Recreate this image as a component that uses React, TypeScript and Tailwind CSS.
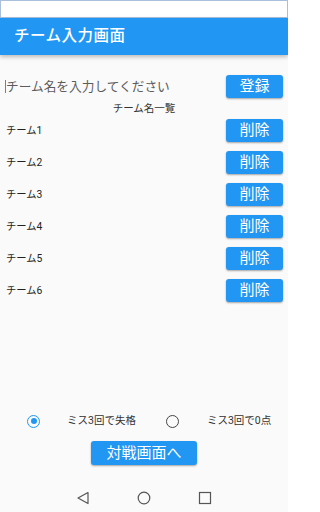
import React from 'react';

const teams = ['チーム1', 'チーム2', 'チーム3', 'チーム4', 'チーム5', 'チーム6'];

const font = { fontFamily: '"Roboto", "Noto Sans CJK JP", sans-serif' };

const BlueButton = ({ label, className = '' }: { label: string; className?: string }) => (
  <button
    className={`bg-[#2196f3] text-white rounded-[3px] shadow-[0_1px_2px_rgba(0,0,0,0.35)] flex items-center justify-center leading-none ${className}`}
  >
    {label}
  </button>
);

const App = () => {
  return (
    <div className="w-[288px] h-[512px] bg-[#fafafa] flex flex-col overflow-hidden" style={font}>
      {/* status bar */}
      <div className="h-[18px] bg-white border border-[#a9bfdc] shrink-0" />

      {/* app bar */}
      <div className="h-[37px] bg-[#2196f3] flex items-center px-[14px] shadow-[0_2px_4px_rgba(0,0,0,0.25)] shrink-0 z-10">
        <span className="text-white text-[15.5px] font-medium tracking-[0.5px]">チーム入力画面</span>
      </div>

      {/* input row */}
      <div className="flex items-center justify-between pl-[5px] pr-[5px] mt-[20px]">
        <div className="flex items-center">
          <span className="w-px h-[13px] bg-[#2196f3]" />
          <span className="text-[12.7px] text-[#5c5c5c]">チーム名を入力してください</span>
        </div>
        <BlueButton label="登録" className="w-[57px] h-[23px] text-[15px]" />
      </div>

      <div className="text-center text-[10.5px] text-[#333] mt-[4px] leading-[14px]">チーム名一覧</div>

      {/* team list */}
      <div className="flex flex-col gap-[9px] mt-[3px] pl-[6px] pr-[5px]">
        {teams.map((t) => (
          <div key={t} className="flex items-center justify-between h-[23px]">
            <span className="text-[10.3px] text-[#222]">{t}</span>
            <BlueButton label="削除" className="w-[57px] h-[23px] text-[15px]" />
          </div>
        ))}
      </div>

      <div className="flex-1" />

      {/* radio row */}
      <div className="flex items-center h-[14px] text-[10.5px] text-[#333]">
        <span className="ml-[27px] w-[13px] h-[13px] rounded-full border-[1.5px] border-[#2196f3] flex items-center justify-center">
          <span className="w-[6px] h-[6px] rounded-full bg-[#2196f3]" />
        </span>
        <span className="ml-[27px]">ミス3回で失格</span>
        <span className="ml-[30px] w-[13px] h-[13px] rounded-full border-[1.5px] border-[#444]" />
        <span className="ml-[28px]">ミス3回で0点</span>
      </div>

      <div className="flex justify-center mt-[13px]">
        <BlueButton label="対戦画面へ" className="w-[106px] h-[24px] text-[15px]" />
      </div>

      {/* nav bar */}
      <div className="h-[47px] flex items-end pb-[7px] justify-center gap-[47px] shrink-0">
        <svg width="14" height="14" viewBox="0 0 14 14">
          <path d="M12 1.5 L2 7 L12 12.5 Z" fill="none" stroke="#555" strokeWidth="1.2" strokeLinejoin="round" />
        </svg>
        <svg width="14" height="14" viewBox="0 0 14 14">
          <circle cx="7" cy="7" r="5.8" fill="none" stroke="#555" strokeWidth="1.2" />
        </svg>
        <svg width="14" height="14" viewBox="0 0 14 14">
          <rect x="1.5" y="1.5" width="11" height="11" fill="none" stroke="#555" strokeWidth="1.2" />
        </svg>
      </div>
    </div>
  );
};

export default App;
